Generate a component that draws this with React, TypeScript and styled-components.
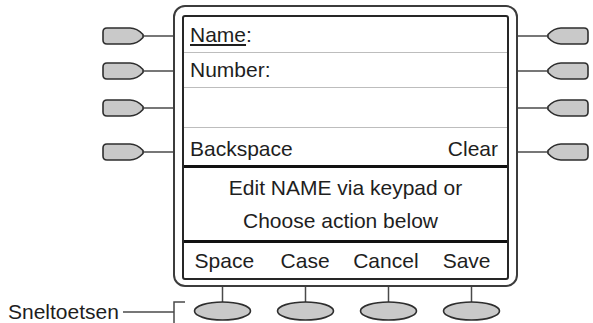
import styled, { createGlobalStyle } from 'styled-components'

const GlobalStyle = createGlobalStyle`
  html, body {
    margin: 0;
    padding: 0;
    background: #ffffff;
  }
  body {
    font-family: "Liberation Sans", Arial, sans-serif;
    color: #1e1e1e;
  }
`;

const KEY_FILL = '#c9c9c9';
const KEY_STROKE = '#2e2e2e';
const WIRE = '#4a4a4a';

// top margin of each side key, so its centre lines up with its screen row
const sideKeyOffsets = [22, 17, 19, 26];
const softKeys = ['Space', 'Case', 'Cancel', 'Save'];

const LeftKey = () => (
  <svg width="173" height="18" viewBox="0 0 173 18">
    <line x1="143" y1="9" x2="173" y2="9" stroke={WIRE} strokeWidth="1.5" />
    <path
      d="M107 1 H130 Q137 1 143 7.5 V10.5 Q137 17 130 17 H107 Q103 17 103 13 V5 Q103 1 107 1 Z"
      fill={KEY_FILL}
      stroke={KEY_STROKE}
      strokeWidth="1.6"
    />
  </svg>
);

const RightKey = () => (
  <svg width="75" height="18" viewBox="0 0 75 18">
    <line x1="0" y1="9" x2="30" y2="9" stroke={WIRE} strokeWidth="1.5" />
    <path
      d="M66 1 H43 Q36 1 30 7.5 V10.5 Q36 17 43 17 H66 Q70 17 70 13 V5 Q70 1 66 1 Z"
      fill={KEY_FILL}
      stroke={KEY_STROKE}
      strokeWidth="1.6"
    />
  </svg>
);

const BottomKey = () => (
  <svg width="83" height="36" viewBox="0 0 83 36">
    <line x1="41.5" y1="0" x2="41.5" y2="15" stroke={WIRE} strokeWidth="1.5" />
    <ellipse cx="41.5" cy="24" rx="28" ry="9" fill={KEY_FILL} stroke={KEY_STROKE} strokeWidth="1.6" />
  </svg>
);

const CaptionWire = () => (
  <svg width="59" height="22" viewBox="0 0 59 22" style={{ overflow: 'visible' }}>
    <line x1="1" y1="11" x2="52" y2="11" stroke={WIRE} strokeWidth="1.5" />
    <polyline points="63,1 52,1 52,22" fill="none" stroke={WIRE} strokeWidth="1.5" />
  </svg>
);

const App = () => {
  return (
    <>
      <GlobalStyle />
      <Page>
        <Phone>
          <SideColumn width={173}>
            {sideKeyOffsets.map((offset, i) => (
              <SideKey key={i} offset={offset}>
                <LeftKey />
              </SideKey>
            ))}
          </SideColumn>

          <Frame>
            <Screen>
              <FieldRow height={36}>
                <span><u>Name</u>:</span>
              </FieldRow>
              <FieldRow height={35}>Number:</FieldRow>
              <FieldRow height={40} />
              <ActionRow>
                <span>Backspace</span>
                <span>Clear</span>
              </ActionRow>
              <Message>
                <div>Edit NAME via keypad or</div>
                <MessageLine shift={10}>Choose action below</MessageLine>
              </Message>
              <SoftKeyLabels>
                {softKeys.map(label => (
                  <SoftLabel key={label}>{label}</SoftLabel>
                ))}
              </SoftKeyLabels>
            </Screen>
          </Frame>

          <SideColumn width={75}>
            {sideKeyOffsets.map((offset, i) => (
              <SideKey key={i} offset={offset}>
                <RightKey />
              </SideKey>
            ))}
          </SideColumn>
        </Phone>

        <Footer>
          <Caption>
            <CaptionText>Sneltoetsen</CaptionText>
            <CaptionWire />
          </Caption>
          <BottomKeys>
            {softKeys.map(label => (
              <BottomKey key={label} />
            ))}
          </BottomKeys>
        </Footer>
      </Page>
    </>
  )
}

const Page = styled.div`
  width: 593px;
  height: 323px;
  overflow: hidden;
  display: flex;
  flex-direction: column;
  padding-top: 5px;
  box-sizing: border-box;
`;

const Phone = styled.div`
  display: flex;
  flex-direction: row;
  height: 282px;
`;

const SideColumn = styled.div<{ width: number }>`
  width: ${p => p.width}px;
  display: flex;
  flex-direction: column;
  flex-shrink: 0;
`;

const SideKey = styled.div<{ offset: number }>`
  margin-top: ${p => p.offset}px;
  height: 18px;
  line-height: 0;
`;

const Frame = styled.div`
  width: 345px;
  height: 282px;
  flex-shrink: 0;
  box-sizing: border-box;
  border: 2px solid #3c3c3c;
  border-radius: 12px;
  padding: 8px 7px 5px 7px;
`;

const Screen = styled.div`
  height: 100%;
  box-sizing: border-box;
  border: 2px solid #262626;
  border-radius: 3px;
  display: flex;
  flex-direction: column;
  font-size: 21px;
`;

const FieldRow = styled.div<{ height: number }>`
  height: ${p => p.height}px;
  box-sizing: border-box;
  border-bottom: 1px solid #bdbdbd;
  display: flex;
  align-items: center;
  padding: 0 6px;
`;

const ActionRow = styled.div`
  height: 40px;
  box-sizing: border-box;
  border-bottom: 3px solid #111111;
  display: flex;
  align-items: center;
  justify-content: space-between;
  padding: 4px 9px 0 6px;
`;

const Message = styled.div`
  height: 75px;
  box-sizing: border-box;
  border-bottom: 3px solid #111111;
  display: flex;
  flex-direction: column;
  justify-content: center;
  text-align: center;
  line-height: 33px;
`;

const MessageLine = styled.div<{ shift: number }>`
  padding-right: ${p => p.shift}px;
`;

const SoftKeyLabels = styled.div`
  flex: 1;
  display: grid;
  grid-template-columns: repeat(4, 1fr);
  align-items: center;
`;

const SoftLabel = styled.span`
  text-align: center;
`;

const Footer = styled.div`
  display: flex;
  flex-direction: row;
  height: 36px;
`;

const Caption = styled.div`
  width: 181px;
  flex-shrink: 0;
  display: flex;
  align-items: center;
  justify-content: space-between;
  padding-top: 14px;
  box-sizing: border-box;
`;

const CaptionText = styled.span`
  margin-left: 8px;
  font-size: 21px;
  color: #1e1e1e;
`;

const BottomKeys = styled.div`
  width: 332px;
  display: grid;
  grid-template-columns: repeat(4, 1fr);
  line-height: 0;
`;

export default App;
